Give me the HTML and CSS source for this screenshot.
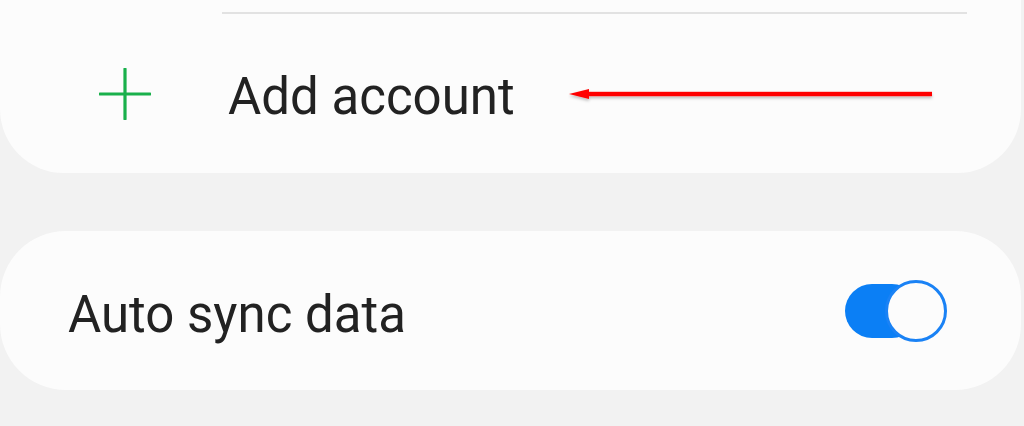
FILE: index.html
```html
<!DOCTYPE html>
<html lang="en">
<head>
<meta charset="utf-8">
<title>Accounts</title>
<link rel="stylesheet" href="styles.css">
</head>
<body>
<section class="card card-top">
  <div class="divider"></div>
  <div class="row row-add">
    <svg class="plus" viewBox="0 0 52 52" aria-hidden="true">
      <path d="M26 1 V51 M1 26 H51" stroke="#19b04b" stroke-width="3.2" stroke-linecap="round" fill="none"/>
    </svg>
    <span class="label label-add">Add account</span>
  </div>
  <svg class="arrow" viewBox="0 0 370 20" aria-hidden="true">
    <defs>
      <filter id="sh" x="-5%" y="-100%" width="110%" height="300%">
        <feDropShadow dx="0" dy="2" stdDeviation="1.5" flood-color="#000" flood-opacity="0.25"/>
      </filter>
    </defs>
    <g filter="url(#sh)">
      <rect x="18" y="7.8" width="346" height="4.4" fill="#ff0000"/>
      <path d="M1 10 L21 5 L21 15 Z" fill="#ff0000"/>
    </g>
  </svg>
</section>

<section class="card card-sync">
  <span class="label label-sync">Auto sync data</span>
  <div class="toggle" role="switch" aria-checked="true">
    <span class="track"></span>
    <span class="thumb"></span>
  </div>
</section>
</body>
</html>
```

FILE: styles.css
```css
html, body {
  margin: 0;
  padding: 0;
}

body {
  background: #f2f2f2;
  font-family: Roboto, "Liberation Sans", sans-serif;
  color: #222222;
  width: 1024px;
  height: 426px;
  overflow: hidden;
}

.card {
  background: #fcfcfc;
  margin-right: 3px;
}

.card-top {
  position: relative;
  border-radius: 0 0 64px 64px;
  padding-top: 12px;
  height: 161px;
}

.divider {
  height: 2px;
  background: #e2e2e2;
  margin: 0 54px 0 222px;
}

.row {
  display: flex;
  align-items: center;
}

.row-add {
  height: 160px;
}

.plus {
  width: 52px;
  height: 52px;
  margin-left: 99px;
  flex: none;
}

.label {
  font-size: 51px;
  font-weight: 400;
  line-height: 60px;
  padding-top: 6px;
  white-space: nowrap;
}

.label-add {
  margin-left: 77px;
}

.arrow {
  position: absolute;
  left: 568px;
  top: 84px;
  width: 370px;
  height: 20px;
}

.card-sync {
  margin-top: 58px;
  height: 159px;
  border-radius: 66px;
  display: flex;
  align-items: center;
  justify-content: space-between;
  padding: 0 74px 0 68px;
}

.label-sync {
  padding-top: 8px;
}

.toggle {
  position: relative;
  width: 102px;
  height: 62px;
  flex: none;
}

.track {
  position: absolute;
  left: 0;
  top: 4px;
  width: 74px;
  height: 54px;
  border-radius: 27px;
  background: #0b7ff5;
}

.thumb {
  position: absolute;
  right: 0;
  top: 0;
  width: 62px;
  height: 62px;
  box-sizing: border-box;
  border-radius: 50%;
  background: #fcfcfc;
  border: 3px solid #1a82f5;
}
```
